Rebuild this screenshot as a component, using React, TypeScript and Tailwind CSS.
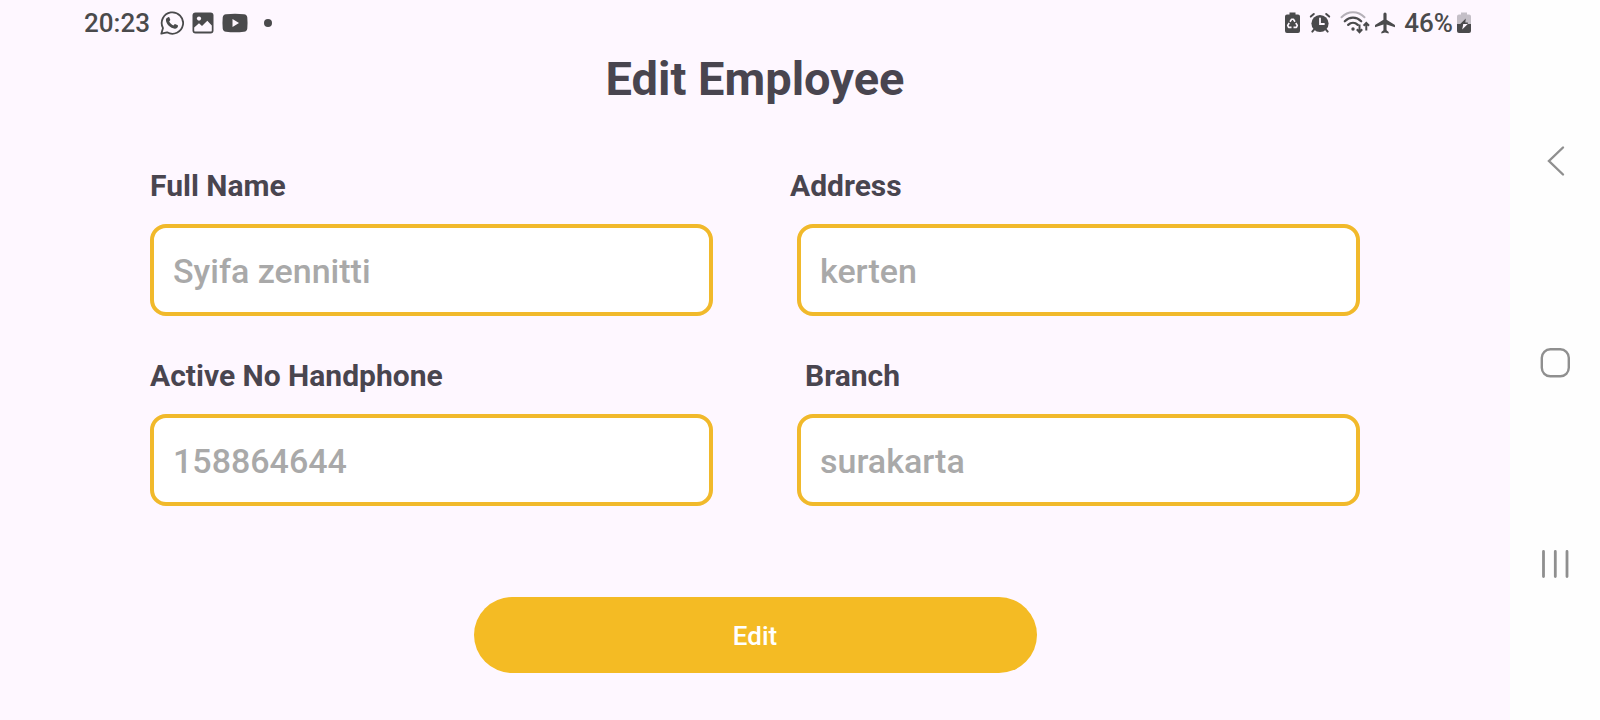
import React from "react";

const ink = "#4a4a4c";

function WhatsAppIcon() {
  return (
    <svg width="24" height="24" viewBox="0 0 24 24" fill="none" aria-hidden="true">
      <path d="M1.3 22.7 3 17.1A10.7 10.7 0 1 1 7.1 21.3Z" stroke={ink} strokeWidth="1.8" strokeLinejoin="round" />
      <path
        d="M8.200 6.200c.4-.2 1-.1 1.200.4l.8 2c.2.4.1.7-.2 1l-.8.9c.9 1.800 2.300 3.100 4.200 4l1-1.100c.3-.3.600-.4 1-.2l2 .9c.5.200.7.600.6 1.100-.3 1.700-1.700 2.600-3.200 2.500-4.400-.5-8.700-4.700-8.900-8.700 0-1.300.9-2.400 2.300-2.800Z"
        fill={ink}
      />
    </svg>
  );
}

function ImageIcon() {
  return (
    <svg width="22" height="22" viewBox="0 0 22 22" aria-hidden="true">
      <rect x="0.500" y="0.500" width="21" height="21" rx="3" fill={ink} />
      <circle cx="7" cy="6.600" r="2.100" fill="#fef7ff" />
      <path d="M2.200 15.500 7 11.200l3 2.800 5.300-5.300 4.500 4.700v5a1.200 1.200 0 0 1-1.200 1.200H3.400a1.200 1.200 0 0 1-1.200-1.200Z" fill="#fef7ff" />
    </svg>
  );
}

function VideoIcon() {
  return (
    <svg width="26" height="20" viewBox="0 0 26 20" aria-hidden="true">
      <path d="M4 1.200Q13 .2 22 1.200 25 1.500 25.300 4.500 25.800 10 25.300 15.500 25 18.500 22 18.800 13 19.800 4 18.800 1 18.500.7 15.500.2 10 .7 4.500 1 1.500 4 1.200Z" fill={ink} />
      <path d="m10.500 6 6.500 4-6.500 4Z" fill="#fef7ff" />
    </svg>
  );
}

function BatterySaverIcon() {
  return (
    <svg width="15" height="22" viewBox="0 0 15 22" aria-hidden="true">
      <path d="M4.500.5h6v2h2.500a2 2 0 0 1 2 2V19a2 2 0 0 1-2 2H2a2 2 0 0 1-2-2V4.500a2 2 0 0 1 2-2h2.500Z" fill={ink} />
      <g fill="none" stroke="#fef7ff" strokeWidth="1.600" strokeLinejoin="round">
        <path d="M5 9.700 6.600 7.200h1.800L10 9.700" />
        <path d="m4.200 11-1.500 2.500.9 1.900h2.900" />
        <path d="m10.800 11 1.500 2.500-.9 1.900H8.500" />
      </g>
    </svg>
  );
}

function AlarmIcon() {
  return (
    <svg width="22" height="22" viewBox="0 0 22 22" fill="none" stroke={ink} strokeLinecap="round" aria-hidden="true">
      <circle cx="11" cy="11.500" r="8.600" fill={ink} stroke="none" />
      <path d="M1.800 4.600 4.800 2M20.200 4.600 17.200 2M5 17.600l-1.700 2M17 17.600l1.700 2" strokeWidth="2" />
      <path d="M11 6.500V12h4" stroke="#fef7ff" strokeWidth="1.800" />
    </svg>
  );
}

function WifiIcon() {
  return (
    <svg width="30" height="24" viewBox="0 0 30 24" fill="none" stroke={ink} strokeLinecap="round" aria-hidden="true">
      <path d="M1.500 6.200C8-.5 18-.5 24.500 6.200" stroke="#b5b0b8" strokeWidth="2" />
      <path d="M4.800 10.200c4.700-4.700 11.700-4.700 16.400 0" strokeWidth="2.300" />
      <path d="M8.200 13.900c2.800-2.700 6.800-2.700 9.600 0" strokeWidth="2.300" />
      <circle cx="13" cy="18" r="1.700" fill={ink} stroke="none" />
      <g strokeWidth="2" strokeLinecap="butt">
        <path d="M19.500 13.500v7.500M16.800 18.300l2.700 2.900 2.700-2.900" />
        <path d="M26.300 19.500V12M23.600 14.800l2.700-2.900 2.700 2.900" />
      </g>
    </svg>
  );
}

function PlaneIcon() {
  return (
    <svg width="22" height="22" viewBox="1.500 1.500 21 21" aria-hidden="true">
      <path d="M21.500 16v-2l-8-5V3.500a1.500 1.500 0 0 0-3 0V9l-8 5v2l8-2.500V19l-2 1.500V22l3.500-1 3.500 1v-1.500L13.500 19v-5.500Z" fill={ink} />
    </svg>
  );
}

function BatteryChargingIcon() {
  return (
    <svg width="14" height="22" viewBox="0 0 14 22" aria-hidden="true">
      <path d="M4 .5h6v2h2a2 2 0 0 1 2 2V12H0V4.500a2 2 0 0 1 2-2h2Z" fill="#c4bfc7" />
      <path d="M0 12h14v7a2 2 0 0 1-2 2H2a2 2 0 0 1-2-2Z" fill={ink} />
      <path d="M8.800 6.500 3.200 12h7.600V10.500H8.300Z" fill={ink} />
      <path d="M6.200 12h4.600L5.200 17.600 6 13.500Z" fill="#fef7ff" />
    </svg>
  );
}

function StatusBar() {
  return (
    <header className="flex h-[46px] items-center justify-between pl-[84px] pr-[39px] text-[26px] leading-none font-medium text-[#4a4a4c]">
      <div className="flex items-center">
        <time>20:23</time>
        <div className="ml-[10px] flex items-center gap-2">
          <WhatsAppIcon />
          <ImageIcon />
          <VideoIcon />
        </div>
        <span className="ml-4 size-2 rounded-full bg-[#4a4a4c]" />
      </div>
      <div className="flex items-center">
        <div className="flex items-center gap-[9px]">
          <BatterySaverIcon />
          <AlarmIcon />
          <WifiIcon />
        </div>
        <div className="ml-1 flex items-center gap-2">
          <PlaneIcon />
          <span>46%</span>
        </div>
        <div className="ml-1">
          <BatteryChargingIcon />
        </div>
      </div>
    </header>
  );
}

type FieldProps = {
  id: string;
  label: string;
  hint: string;
  labelClass?: string;
};

function Field({ id, label, hint, labelClass = "" }: FieldProps) {
  return (
    <div className="flex min-w-0 flex-col gap-5">
      <label htmlFor={id} className={`text-[30px] leading-9 font-bold text-[#49454f] ${labelClass}`}>
        {label}
      </label>
      <input
        id={id}
        type="text"
        placeholder={hint}
        className="h-[92px] w-full rounded-2xl border-4 border-[#f1b92b] bg-white px-[19px] pt-[2px] text-[34px] font-medium text-[#49454f] outline-none placeholder:text-[#a9a9a9]"
      />
    </div>
  );
}

function NavigationBar() {
  return (
    <nav className="flex w-[90px] shrink-0 flex-col items-center justify-center gap-[170px] bg-[#fefefe] pt-[6px]">
      <button type="button" aria-label="Back">
        <svg width="32" height="32" viewBox="0 0 32 32" fill="none" stroke="#8f8f8f" strokeWidth="2.400" strokeLinecap="round">
          <path d="M24 2.500 10 16l14 13.500" />
        </svg>
      </button>
      <button type="button" aria-label="Home">
        <svg width="32" height="32" viewBox="0 0 32 32" fill="none" stroke="#8f8f8f" strokeWidth="2.400">
          <rect x="2.800" y="2.300" width="27" height="27" rx="8.500" />
        </svg>
      </button>
      <button type="button" aria-label="Recent apps">
        <svg width="32" height="32" viewBox="0 0 32 32" fill="none" stroke="#8f8f8f" strokeWidth="2.800" strokeLinecap="round">
          <path d="M4.500 2.500v25M16.300 2.500v25M28 2.500v25" />
        </svg>
      </button>
    </nav>
  );
}

export default function App() {
  return (
    <div className="flex min-h-screen bg-[#fef7ff] font-['Roboto',sans-serif]">
      <div className="flex min-w-0 flex-1 flex-col">
        <StatusBar />
        <main className="flex flex-col px-[150px]">
          <h1 className="mt-[3px] text-center text-[47px] leading-[60px] font-bold text-[#49454f]">Edit Employee</h1>
          <form className="mt-[59px] flex flex-col" onSubmit={(e) => e.preventDefault()}>
            <div className="grid grid-cols-2 gap-x-[84px] gap-y-[42px]">
              <Field id="name" label="Full Name" hint="Syifa zennitti" />
              <Field id="address" label="Address" hint="kerten" labelClass="-ml-[7px]" />
              <Field id="phone" label="Active No Handphone" hint="158864644" />
              <Field id="branch" label="Branch" hint="surakarta" labelClass="ml-2" />
            </div>
            <button
              type="submit"
              className="mt-[91px] h-[76px] w-[calc(50%-42px)] self-center rounded-[38px] bg-[#f4bb24] pt-[2px] text-[26px] font-medium text-white"
            >
              Edit
            </button>
          </form>
        </main>
      </div>
      <NavigationBar />
    </div>
  );
}
